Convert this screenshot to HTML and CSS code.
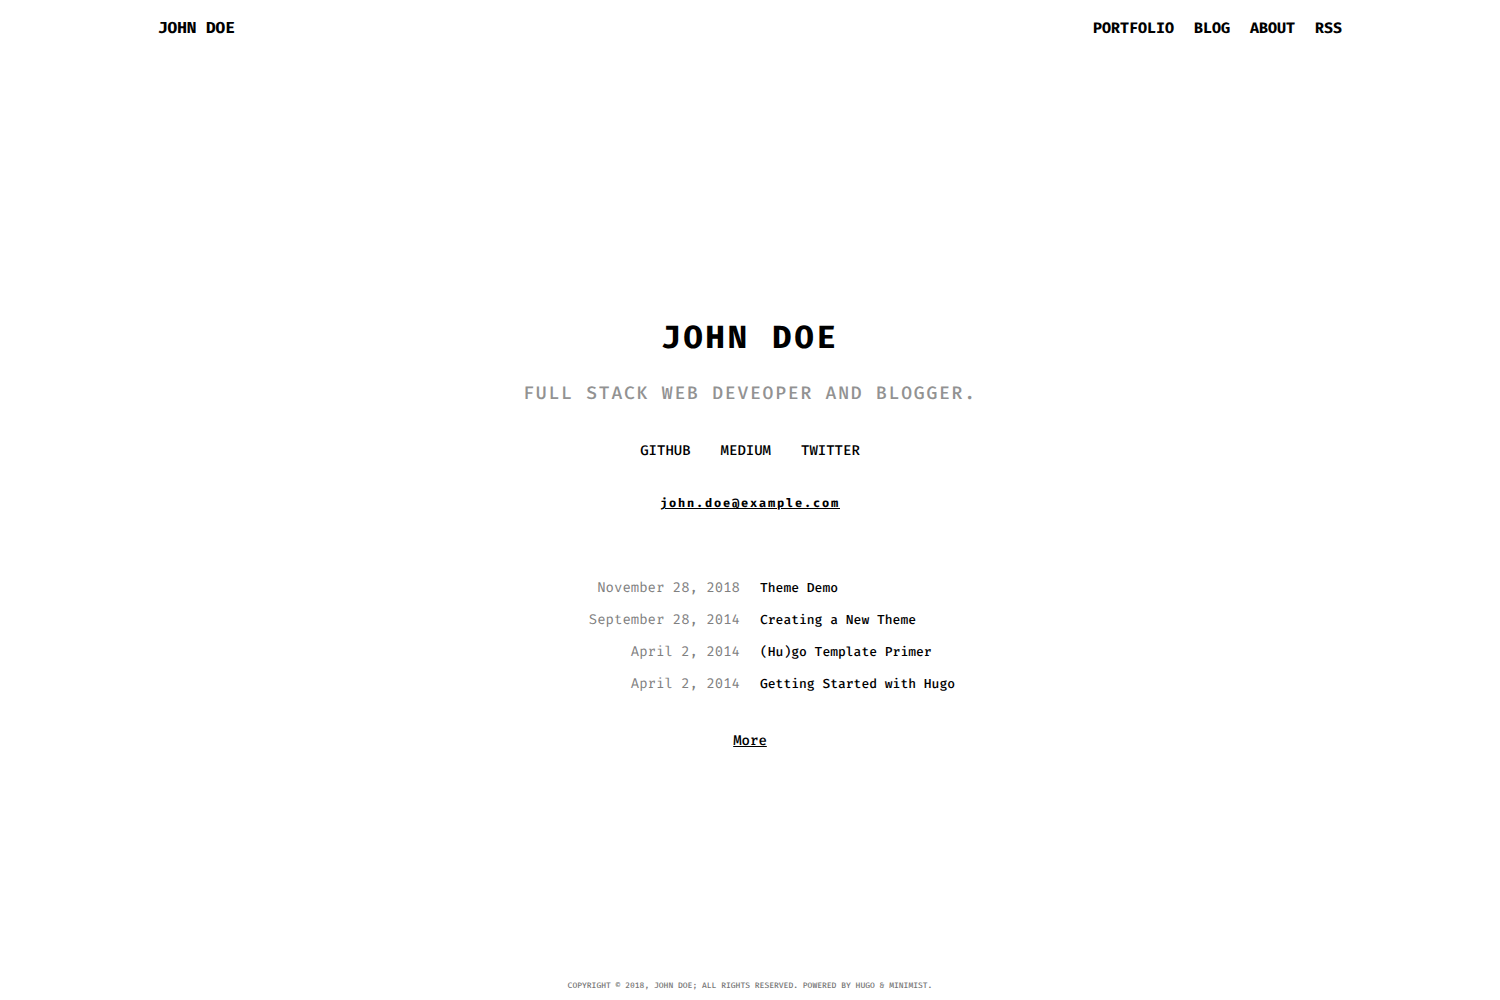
FILE: index.html
```html
<!DOCTYPE html>
<html lang="en">
<head>
  <meta charset="utf-8">
  <meta name="viewport" content="width=device-width, initial-scale=1">
  <title>John Doe</title>
  <link rel="stylesheet" href="styles.css">
</head>
<body>
  <header class="site-header">
    <a class="brand" href="/">JOHN DOE</a>
    <nav class="site-nav">
      <a href="/portfolio">PORTFOLIO</a>
      <a href="/blog">BLOG</a>
      <a href="/about">ABOUT</a>
      <a href="/index.xml">RSS</a>
    </nav>
  </header>
  <main class="intro">
    <h1 class="name">JOHN DOE</h1>
    <h2 class="tagline">FULL STACK WEB DEVEOPER AND BLOGGER.</h2>
    <nav class="social">
      <a href="https://github.com">GITHUB</a>
      <a href="https://medium.com">MEDIUM</a>
      <a href="https://twitter.com">TWITTER</a>
    </nav>
    <a class="email" href="mailto:john.doe@example.com">john.doe@example.com</a>
    <ul class="posts">
      <li class="post"><time datetime="2018-11-28">November 28, 2018</time><a href="/blog/theme-demo">Theme Demo</a></li>
      <li class="post"><time datetime="2014-09-28">September 28, 2014</time><a href="/blog/creating-a-new-theme">Creating a New Theme</a></li>
      <li class="post"><time datetime="2014-04-02">April 2, 2014</time><a href="/blog/template-primer">(Hu)go Template Primer</a></li>
      <li class="post"><time datetime="2014-04-02">April 2, 2014</time><a href="/blog/getting-started">Getting Started with Hugo</a></li>
    </ul>
    <a class="more" href="/blog">More</a>
  </main>
  <footer class="site-footer">COPYRIGHT © 2018, JOHN DOE; ALL RIGHTS RESERVED. POWERED BY HUGO &amp; MINIMIST.</footer>
</body>
</html>
```

FILE: styles.css
```css
* {
  box-sizing: border-box;
}

body {
  display: flex;
  flex-direction: column;
  min-height: 100vh;
  margin: 0;
  background: #fff;
  color: #000;
  font-family: "Fira Mono", "DejaVu Sans Mono", "Liberation Mono", monospace;
  font-size: 14px;
  line-height: 20px;
  text-rendering: geometricPrecision;
}

a {
  color: inherit;
  font-weight: 500;
  text-decoration: none;
}

.site-header {
  display: flex;
  justify-content: space-between;
  align-items: baseline;
  width: 100%;
  max-width: 1200px;
  margin: 0 auto;
  padding: 18px 8px;
}

.site-header a {
  font-weight: 700;
}

.brand {
  font-size: 16px;
}

.site-nav {
  display: flex;
  flex-wrap: wrap;
  gap: 20px;
  font-size: 15px;
}

.intro {
  display: flex;
  flex: 1;
  flex-direction: column;
  justify-content: center;
  align-items: center;
  padding: 60px 20px 20px;
}

.name {
  margin: 0 0 23px;
  font-size: 32px;
  line-height: 40px;
  letter-spacing: 3px;
}

.tagline {
  margin: 0 0 36px;
  color: #929292;
  font-size: 18px;
  font-weight: 500;
  line-height: 24px;
  letter-spacing: 0.1em;
  text-align: center;
}

.social {
  display: flex;
  gap: 30px;
  margin-bottom: 33px;
}

.email {
  margin-bottom: 64px;
  font-size: 12px;
  font-weight: 700;
  letter-spacing: 0.15em;
  text-decoration: underline;
}

.posts {
  display: flex;
  flex-direction: column;
  gap: 11px;
  width: 100%;
  margin: 0 0 36px;
  padding: 0;
  list-style: none;
}

.post {
  display: grid;
  grid-template-columns: 1fr 1fr;
  align-items: baseline;
  gap: 20px;
}

.post time {
  color: #808080;
  text-align: right;
}

.post a {
  font-size: 13px;
}

.more {
  text-decoration: underline;
}

.site-footer {
  padding: 5px 8px 3px;
  color: #777;
  font-size: 8px;
  font-weight: 500;
  text-align: center;
}
```
